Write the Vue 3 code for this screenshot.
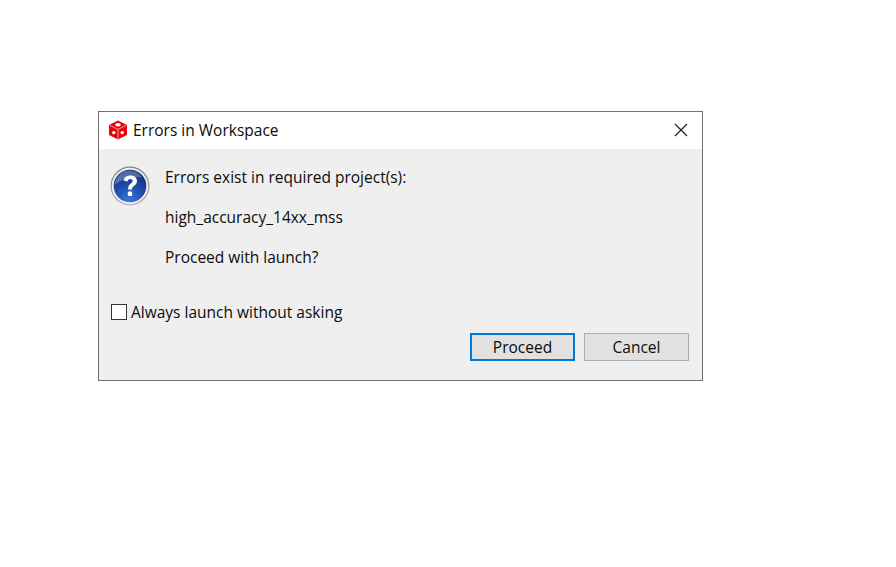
<script setup>
const lines = ['Errors exist in required project(s):', 'high_accuracy_14xx_mss', 'Proceed with launch?']
</script>

<template>
  <div class="page">
    <div class="dialog">
      <header class="titlebar">
        <svg class="logo" width="20" height="20" viewBox="0 0 20 20">
          <path d="M10 .5 19 5v10l-9 4.500L1 15V5z" fill="#e3060f" />
          <path d="M1.600 5.200 10 9.400l8.400-4.200M10 9.400V19" fill="none" stroke="#fff" stroke-width="0.8" opacity=".75" />
          <ellipse cx="10" cy="4.800" rx="2.800" ry="1.700" fill="#fff" />
          <circle cx="5.800" cy="12.600" r="1.700" fill="#fff" />
          <circle cx="14.200" cy="12.600" r="1.700" fill="#fff" />
        </svg>
        <span class="title">Errors in Workspace</span>
        <svg class="close" width="14" height="14" viewBox="0 0 14 14">
          <path d="M1 1l12 12M13 1 1 13" stroke="#1a1a1a" stroke-width="1.100" fill="none" />
        </svg>
      </header>
      <main class="body">
        <section class="message">
          <svg class="question" width="40" height="40" viewBox="0 0 40 40">
            <defs>
              <linearGradient id="ring" x1="0" y1="0" x2="0" y2="1">
                <stop offset="0" stop-color="#7f848c" />
                <stop offset="1" stop-color="#b4b7bd" />
              </linearGradient>
              <radialGradient id="ball" cx="0.45" cy="0.95" r="0.95">
                <stop offset="0" stop-color="#3a78d8" />
                <stop offset="0.5" stop-color="#1f4dae" />
                <stop offset="1" stop-color="#12296f" />
              </radialGradient>
            </defs>
            <circle cx="20" cy="20" r="19.500" fill="url(#ring)" />
            <circle cx="20" cy="20" r="18.200" fill="#eef0f3" />
            <circle cx="20" cy="20" r="16.300" fill="url(#ball)" />
            <path d="M4.500 19C6 10 12 4.500 19 4.500c6 0 10 2.500 13 7-7-1.500-18 0-27.500 7.500z" fill="#fff" opacity=".28" />
            <path d="M13.600 14.500c.6-3.300 3.300-5 6.700-5 3.900 0 6.700 2.200 6.700 5.500 0 2.600-1.600 3.900-3.200 5.100-1.300 1-1.700 1.600-1.700 3.400h-4c0-3 .8-4.300 2.500-5.700 1.200-1 2-1.700 2-2.800 0-1.200-1-1.900-2.300-1.900-1.500 0-2.400.9-2.700 2.500z" fill="#fff" />
            <rect x="17.800" y="25.500" width="4.400" height="4.400" rx="1.200" fill="#fff" />
          </svg>
          <div class="lines">
            <p v-for="line in lines" :key="line">{{ line }}</p>
          </div>
        </section>
        <label class="check">
          <span class="box"></span>
          <span>Always launch without asking</span>
        </label>
        <footer class="actions">
          <button class="btn primary">Proceed</button>
          <button class="btn">Cancel</button>
        </footer>
      </main>
    </div>
  </div>
</template>

<style scoped>
.page {
  width: 896px;
  height: 567px;
  box-sizing: border-box;
  padding: 111px 0 0 98px;
  background: #fff;
  font-family: "Open Sans", "Noto Sans", sans-serif;
  font-size: 15.500px;
  color: #0c0c0c;
}
.dialog {
  width: 605px;
  height: 270px;
  box-sizing: border-box;
  border: 1px solid #707070;
  display: flex;
  flex-direction: column;
}
.titlebar {
  height: 37px;
  box-sizing: border-box;
  flex: none;
  display: flex;
  align-items: center;
  padding: 0 14px 2px 9px;
  background: #fff;
}
.logo { margin-right: 5px; }
.title { flex: 1; }
.close { display: block; }
.body {
  flex: 1;
  display: flex;
  flex-direction: column;
  background: #efefef;
  padding: 18px 13px 0 11px;
}
.message {
  display: flex;
  gap: 15px;
}
.question { margin-top: -1px; flex: none; }
.lines {
  display: flex;
  flex-direction: column;
  gap: 20px;
}
.lines p {
  margin: 0;
  height: 20px;
  line-height: 20px;
  white-space: nowrap;
}
.check {
  display: flex;
  align-items: center;
  gap: 4px;
  height: 20px;
  margin-top: 35px;
  padding-left: 1px;
  white-space: nowrap;
}
.box {
  width: 16px;
  height: 16px;
  box-sizing: border-box;
  border: 1px solid #333;
  background: #fff;
}
.actions {
  display: flex;
  justify-content: flex-end;
  gap: 9px;
  margin-top: 11px;
}
.btn {
  width: 105px;
  height: 28px;
  box-sizing: border-box;
  border: 1px solid #adadad;
  background: #e1e1e1;
  font: inherit;
  color: inherit;
  padding: 0;
}
.primary {
  border: 2px solid #0078d7;
}
</style>
